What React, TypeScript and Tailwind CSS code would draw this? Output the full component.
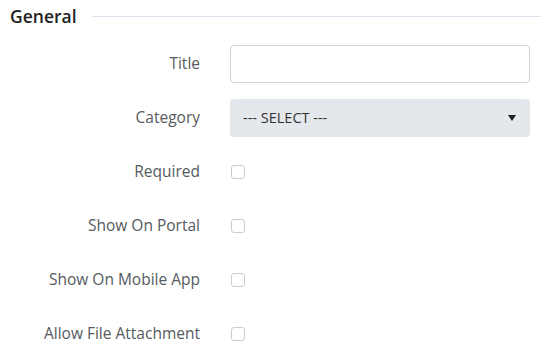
import React from "react";

const rows = ["Required", "Show On Portal", "Show On Mobile App", "Allow File Attachment"];

export default function App() {
  return (
    <div
      className="w-[541px] h-[356px] bg-white overflow-hidden"
      style={{ fontFamily: '"Open Sans", "Noto Sans", sans-serif' }}
    >
      <div className="flex items-center pl-[10px] pt-[4px] h-[28px]">
        <span className="text-[17.5px] font-semibold text-[#222222] leading-[24px]">General</span>
        <div className="flex-1 ml-[15px] h-px bg-[#dbe3f0]" />
      </div>
      <div className="mt-[17px] flex flex-col gap-4">
        <div className="flex items-center h-[38px]">
          <label className="w-[200px] text-right text-[15.5px] text-[#555a60]">Title</label>
          <input className="ml-[30px] w-[300px] h-[38px] border border-[#cfd3d8] rounded-[4px] bg-white outline-none" />
        </div>
        <div className="flex items-center h-[38px]">
          <label className="w-[200px] text-right text-[15.5px] text-[#555a60]">Category</label>
          <div className="ml-[30px] w-[300px] h-[38px] rounded-[4px] bg-[#e4e7eb] border border-[#e0e3e7] flex items-center justify-between pl-[12px] pr-[12px]">
            <span className="text-[14.5px] text-[#333333]">--- SELECT ---</span>
            <svg width="8" height="6" viewBox="0 0 8 6" className="mr-[1px]">
              <path d="M0 0 L8 0 L4 6 Z" fill="#222" />
            </svg>
          </div>
        </div>
        {rows.map((r) => (
          <div key={r} className="flex items-center h-[38px]">
            <label className="w-[200px] text-right text-[15.5px] text-[#555a60]">{r}</label>
            <div className="ml-[31px] w-[14px] h-[14px] border border-[#c8ccd1] rounded-[3px] bg-white" />
          </div>
        ))}
      </div>
    </div>
  );
}
